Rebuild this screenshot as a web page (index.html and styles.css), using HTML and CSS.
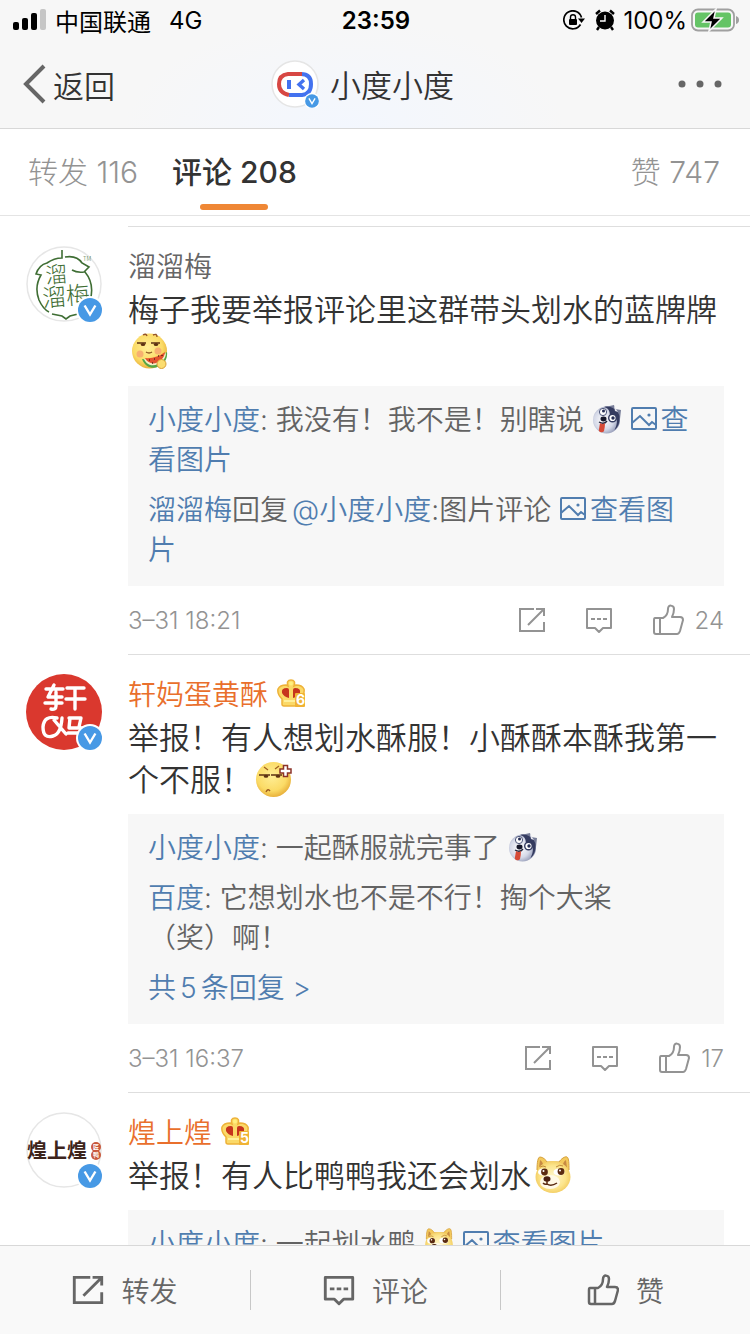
FILE: index.html
```html
<!DOCTYPE html>
<html lang="zh-CN">
<head>
<meta charset="utf-8">
<meta name="viewport" content="width=device-width, initial-scale=1">
<title>小度小度</title>
<link rel="stylesheet" href="styles.css">
</head>
<body>
<svg class="sprite" aria-hidden="true">
  <defs>
    <radialGradient id="yellow" cx=".45" cy=".4" r=".6"><stop offset="0" stop-color="#ffee96"/><stop offset=".7" stop-color="#fbdb66"/><stop offset="1" stop-color="#e9b23c"/></radialGradient>
    <radialGradient id="cream" cx=".5" cy=".5" r=".6"><stop offset="0" stop-color="#fff6cd"/><stop offset=".6" stop-color="#fce58c"/><stop offset="1" stop-color="#eec04c"/></radialGradient>
    <radialGradient id="fur" cx=".4" cy=".5" r=".6"><stop offset="0" stop-color="#ffffff"/><stop offset=".6" stop-color="#d5d9e8"/><stop offset="1" stop-color="#8990ae"/></radialGradient>
    <symbol id="share" viewBox="0 0 28 28"><path d="M16 3H2v22h24V16M26 10V3h-8M26 3 10 19" fill="none" stroke="currentColor"/></symbol>
    <symbol id="comment" viewBox="0 0 28 28"><path d="M2 3h24v19h-8l-4 4-4-4H2zM6 13h4M12 13h4M18 13h4" fill="none" stroke="currentColor" stroke-linejoin="round"/></symbol>
    <symbol id="like" viewBox="0 0 32 32"><path d="M8 14v15M3 14h8c4-2 5-6 5-9 0-5 6-4 6 0 0 4-1 6-2 8h8q3 0 3 3l-3 11q-1 3-3 3H4q-2 0-2-2V16q0-2 1-2z" fill="none" stroke="currentColor" stroke-linejoin="round"/></symbol>
    <symbol id="picture" viewBox="0 0 28 28"><path d="M3 3h22q1 0 1 1v19q0 1-1 1H3q-1 0-1-1V4q0-1 1-1zM2 18l8-7 9 9 3-3 4 3" fill="none" stroke="currentColor" stroke-width="2"/><circle cx="19" cy="10" r="1.6" fill="currentColor"/></symbol>
    <symbol id="verified" viewBox="0 0 28 28"><circle cx="14" cy="14" r="14" fill="#fff"/><circle cx="14" cy="14" r="12" fill="#4799e5"/><path d="M8.600 9.500 14 18.500l5.400-9" fill="none" stroke="#fff" stroke-width="2.400"/></symbol>
    <symbol id="melon" viewBox="0 0 38 38">
      <circle cx="18.500" cy="19" r="17.500" fill="url(#yellow)"/>
      <path d="M12 3q3-2 4 1M22 3q4-2 4 2" fill="none" stroke="#95542a" stroke-width="1.400"/>
      <path d="M6 11h9M20 11h9" stroke="#5c3112" stroke-width="1.400"/><ellipse cx="12" cy="12.500" rx="2.200" ry="1.600" fill="#5c3112"/><ellipse cx="25" cy="12.500" rx="2.200" ry="1.600" fill="#5c3112"/>
      <circle cx="9" cy="22" r="3.500" fill="#f7b070"/><circle cx="27" cy="19" r="3.500" fill="#f7b070"/><path d="M15 20q3 2 6 0" fill="none" stroke="#8a5423" stroke-width="1.300"/>
      <path d="M11 27q13 2 25-7c2 15-19 23-25 7z" fill="#55a646"/><path d="M13 27q12 1 22-6c0 11-17 18-22 6z" fill="#f5f0c8"/><path d="M14 26q11 1 20-6c-1 11-15 16-20 6z" fill="#e4512e"/>
      <path d="M18 28h1M23 27h1M27 24h1M21 31h1M31 23v1" stroke="#60281a" stroke-width="1.600"/><circle cx="30.500" cy="32" r="4.500" fill="#fbdd70" stroke="#d99e36"/>
    </symbol>
    <symbol id="angry" viewBox="0 0 38 38">
      <circle cx="18.500" cy="19.500" r="17.500" fill="url(#yellow)"/>
      <path d="M9 7l4 3M20 9l4-3" stroke="#a0601f" stroke-width="1.200"/>
      <path d="M4 15h11M16 15h11" stroke="#5c3112" stroke-width="1.500"/><ellipse cx="11" cy="16.300" rx="2.300" ry="1.500" fill="#5c3112"/><ellipse cx="23" cy="16.300" rx="2.300" ry="1.500" fill="#5c3112"/>
      <path d="M11 32q2-4 4-1" fill="none" stroke="#9c5a20" stroke-width="1.400"/>
      <path d="M28.500 5.500v3.500h-3.500v4h3.500v3.500h4v-3.500h3.500v-4h-3.500V5.500z" fill="#fff" stroke="#8c3328" stroke-width="1.500"/>
    </symbol>
    <symbol id="doge" viewBox="0 0 38 38">
      <path d="M3 14C3 6 4 1 6 1c3 0 6 3 7 5h12c2-3 6-6 8-5 2 1 2 7 2 13z" fill="#f3c95c" stroke="#d6a13b"/>
      <path d="M6 4c2 1 3 3 3 5l-4 3zM32 4c-2 1-3 3-3 5l4 3z" fill="#c78a43"/>
      <ellipse cx="19" cy="21" rx="17.500" ry="16" fill="url(#cream)"/><ellipse cx="16" cy="26" rx="10" ry="7" fill="#fff9e6"/>
      <ellipse cx="9" cy="16" rx="5" ry="3.600" fill="#fff"/><ellipse cx="25" cy="16" rx="5.500" ry="3.600" fill="#fff"/><circle cx="10.500" cy="16" r="3.400" fill="#5a2a10"/><circle cx="27" cy="15.500" r="3.400" fill="#5a2a10"/><circle cx="9.500" cy="15" r="1" fill="#fff"/><circle cx="26" cy="14.500" r="1" fill="#fff"/>
      <path d="M6 11q3-2 6 0M22 11q4-3 7-1" fill="none" stroke="#c18a38"/>
      <ellipse cx="13" cy="23" rx="3.500" ry="2.800" fill="#4a2011"/><path d="M13 25v3q4 3 10-1M13 28q-2 1-4-1" fill="none" stroke="#5a2a10" stroke-width="1.500"/>
    </symbol>
    <symbol id="husky" viewBox="0 0 30 30">
      <path d="M13 3 22 1l1 4 6 1-1 9z" fill="#777d98"/><circle cx="14.500" cy="16" r="13.500" fill="url(#fur)"/>
      <path d="M12 3c7-2 14 3 15.500 9 .5 6-1 11-5 14 3-6 3-10 1-12-4 1-6-3-6-6q-1-4-5.500-5z" fill="#343b5f"/>
      <path d="M22 2l1 5 3 1z" fill="#e4e5ee"/>
      <circle cx="11" cy="8" r="3.600" fill="#fff" stroke="#4d5679"/><circle cx="20.500" cy="14" r="3.800" fill="#fff" stroke="#343b5f" stroke-width="1.400"/><circle cx="11.500" cy="7" r="1.500" fill="#252d54"/><circle cx="21" cy="14" r="1.700" fill="#252d54"/>
      <ellipse cx="11.500" cy="15" rx="3" ry="2.400" fill="#16182b"/><path d="M7 18q5 3 8-1" fill="none" stroke="#25263c" stroke-width="1.400"/><path d="M8 19q3 2 5 0 0 4-1 8-1 2-4 1-2-1-1-3z" fill="#d64a37"/>
    </symbol>
    <symbol id="crown" viewBox="0 0 28 28">
      <path d="M5 25V20Q0 15 1 10q2-4 8-4l2 1q-2-6 3-6t3 6l2-1q6 0 8 4 1 5-4 10v5q0 2-2 2H7q-2 0-2-2z" fill="#fbd968" stroke="#eeb238" stroke-width="1.500"/>
      <path d="M5 14q-1-5 5-5 2 0 2 2v8q-5-1-7-5zM23 14q1-5-5-5-2 0-2 2v8q5-1 7-5z" fill="#c6331d"/><circle cx="14" cy="4.500" r="2" fill="#fff07e"/><path d="M7 22h13" stroke="#fff09b" stroke-width="2"/>
      <rect x="18" y="14" width="10" height="14" rx="1" fill="#f0b335"/>
    </symbol>
  </defs>
</svg>

<header class="top">
  <div class="status">
    <div class="status-side">
      <svg class="signal" viewBox="0 0 34 22" aria-hidden="true"><rect y="13" width="6" height="8" rx="2"/><rect x="9" y="9" width="6" height="12" rx="2"/><rect x="18" y="4" width="6" height="17" rx="2"/><rect x="27" width="6" height="21" rx="2" fill="#c6c6c6"/></svg>
      <span>中国联通</span><span class="network">4G</span>
    </div>
    <time class="clock">23:59</time>
    <div class="status-side status-right">
      <svg class="lock" viewBox="0 0 22 20" aria-hidden="true"><path d="M17.500 14.500a9 9 0 1 1 1-7" fill="none" stroke="#000" stroke-width="1.700"/><path d="M15 8.500h7l-3.500 4.500z"/><rect x="6" y="9" width="8" height="6" rx="1"/><path d="M7.500 9V7q0-2.200 2.500-2.200T12.500 7v2" fill="none" stroke="#000" stroke-width="1.400"/></svg>
      <svg class="alarm" viewBox="0 0 20 22" aria-hidden="true"><circle cx="10" cy="11.500" r="9"/><path d="M1 5 5 1.500M19 5l-4-3.500M4 18l-2 3M16 18l2 3" stroke="#000" stroke-width="2.400"/><path d="M10 6v6H5" fill="none" stroke="#fff" stroke-width="1.400"/></svg>
      <span>100%</span>
      <svg class="battery" viewBox="0 0 48 24" aria-hidden="true"><rect x="1" y="1.500" width="42" height="21" rx="6" fill="none" stroke="#a0a0a0" stroke-width="1.800"/><rect x="4" y="4.500" width="36" height="15" rx="3" fill="#65c466"/><path d="M45 8q3 1 3 4t-3 4z" fill="#a0a0a0"/><path d="M25 1 12 14h8l-2 9 13-13h-8z" stroke="#f7f7f7" stroke-width="1.500"/></svg>
    </div>
  </div>
  <nav class="nav">
    <button class="back" type="button"><svg viewBox="0 0 24 40" aria-hidden="true"><path d="M21 2 3 20l18 18" fill="none" stroke="#666" stroke-width="4"/></svg>返回</button>
    <div class="title">
      <svg class="title-avatar" viewBox="0 0 48 48" aria-hidden="true"><circle cx="24" cy="24" r="23" fill="#fff" stroke="#e5e5e5" stroke-width="1.500"/><path d="M30 14q10 0 10 10t-9 11H18" fill="none" stroke="#4372ef" stroke-width="4"/><path d="M31 14H17Q8 15 8 24t10 11" fill="none" stroke="#d74743" stroke-width="4"/><path d="M16 20h4v9h-4z" fill="#4372ef"/><path d="M33 20l-5 4.500 5 4.500" fill="none" stroke="#4372ef" stroke-width="3.400"/><use href="#verified" x="33" y="33" width="16" height="16"/></svg>
      <h1>小度小度</h1>
    </div>
    <button class="more" type="button" aria-label="更多"><svg viewBox="0 0 44 8" aria-hidden="true"><circle cx="4" cy="4" r="3.500"/><circle cx="22" cy="4" r="3.500"/><circle cx="40" cy="4" r="3.500"/></svg></button>
  </nav>
</header>

<div class="tabs">
  <button type="button">转发 116</button>
  <button type="button" class="active">评论 208</button>
  <button type="button" class="tab-end">赞 747</button>
</div>

<main class="comments">
  <article class="item">
    <svg class="avatar" viewBox="0 0 76 76" role="img" aria-label="溜溜梅">
      <circle cx="38" cy="38" r="37" fill="#fff" stroke="#e6e6e6" stroke-width="1.500"/>
      <g fill="none" stroke="#3f6e34" stroke-width="1.600"><path d="M36 4v8q-8 0-15 5-8 2-11 11l5 1q-7 12-2 25 4 9 10 12M39 11q12-2 17 6l7 4-5 5q-7 1-12-2M59 26q10 12 5 29M26 68l10 2 4 3 4-3 8-2"/></g>
      <g class="plum" fill="#3f6e34" transform="rotate(-5 38 38)"><text x="20" y="36" font-size="22">溜</text><text x="15" y="59" font-size="24">溜梅</text></g>
      <text class="plum" x="57" y="15" font-size="6" fill="#3f6e34">TM</text>
      <use href="#verified" x="50" y="50" width="28" height="28"/>
    </svg>
    <div class="content">
      <h2 class="name plain">溜溜梅</h2>
      <p class="text">梅子我要举报评论里这群带头划水的蓝牌牌<svg class="emoji"><use href="#melon"/></svg></p>
      <div class="replies">
        <p><a href="#">小度小度</a>: 我没有！我不是！别瞎说 <svg class="emoji-s"><use href="#husky"/></svg> <a href="#"><svg class="pic"><use href="#picture"/></svg>查看图片</a></p>
        <p><a href="#">溜溜梅</a>回复<a class="mention" href="#">@小度小度</a>:图片评论 <a href="#"><svg class="pic"><use href="#picture"/></svg>查看图片</a></p>
      </div>
      <footer class="meta">
        <time>3–31 18:21</time>
        <button type="button" aria-label="转发"><svg class="i28"><use href="#share"/></svg></button>
        <button type="button" aria-label="评论"><svg class="i28"><use href="#comment"/></svg></button>
        <button type="button"><svg class="i32"><use href="#like"/></svg>24</button>
      </footer>
    </div>
  </article>

  <article class="item">
    <svg class="avatar" viewBox="0 0 76 76" role="img" aria-label="轩妈">
      <circle cx="38" cy="38" r="38" fill="#da382e"/>
      <g fill="none" stroke="#fff" stroke-width="3.400" stroke-linecap="round" stroke-linejoin="round">
        <path d="M20 15h17M28 11l-6 12h14M19 29h17M30 18v14q0 4-5 3M41 14h17M40 25h19M49 14v21"/>
        <path d="M31 44q-13-3-14 9 0 12 10 9 8-2 9-18M28 46l12 14M43 44h12l-2 9M44 44l-1 10h15l-2 10M42 59h11"/>
      </g>
      <use href="#verified" x="50" y="50" width="28" height="28"/>
    </svg>
    <div class="content">
      <h2 class="name">轩妈蛋黄酥<svg class="crown" viewBox="0 0 28 28"><use href="#crown"/><text x="19" y="26">6</text></svg></h2>
      <p class="text">举报！有人想划水酥服！小酥酥本酥我第一个不服！<svg class="emoji"><use href="#angry"/></svg></p>
      <div class="replies">
        <p><a href="#">小度小度</a>: 一起酥服就完事了 <svg class="emoji-s"><use href="#husky"/></svg></p>
        <p><a href="#">百度</a>: 它想划水也不是不行！掏个大桨<span class="keep">（奖）啊！</span></p>
        <p><a href="#">共<span class="count">5</span>条回复 &gt;</a></p>
      </div>
      <footer class="meta">
        <time>3–31 16:37</time>
        <button type="button" aria-label="转发"><svg class="i28"><use href="#share"/></svg></button>
        <button type="button" aria-label="评论"><svg class="i28"><use href="#comment"/></svg></button>
        <button type="button"><svg class="i32"><use href="#like"/></svg>17</button>
      </footer>
    </div>
  </article>

  <article class="item">
    <svg class="avatar" viewBox="0 0 76 76" role="img" aria-label="煌上煌">
      <circle cx="38" cy="38" r="37" fill="#fff" stroke="#e6e6e6" stroke-width="1.500"/>
      <text class="brand" x="1" y="46" font-size="20" fill="#3d241b">煌上煌</text>
      <circle cx="70" cy="35" r="5" fill="#c9583c"/><circle cx="70" cy="43" r="5" fill="#c9583c"/>
      <text class="brand" x="67" y="37" font-size="6" fill="#fff">匠</text><text class="brand" x="67" y="45" font-size="6" fill="#fff">鸭</text>
      <use href="#verified" x="50" y="50" width="28" height="28"/>
    </svg>
    <div class="content">
      <h2 class="name">煌上煌<svg class="crown" viewBox="0 0 28 28"><use href="#crown"/><text x="19" y="26">5</text></svg></h2>
      <p class="text">举报！有人比鸭鸭我还会划水<svg class="emoji"><use href="#doge"/></svg></p>
      <div class="replies">
        <p><a href="#">小度小度</a>: 一起划水鸭 <svg class="emoji-s"><use href="#doge"/></svg> <a href="#"><svg class="pic"><use href="#picture"/></svg>查看图片</a></p>
      </div>
    </div>
  </article>
</main>

<footer class="toolbar">
  <button type="button"><svg class="i32"><use href="#share"/></svg>转发</button>
  <button type="button"><svg class="i32"><use href="#comment"/></svg>评论</button>
  <button type="button"><svg class="i32"><use href="#like"/></svg>赞</button>
</footer>
</body>
</html>
```
FILE: styles.css
```css
* { box-sizing: border-box; }
body {
  margin: 0;
  height: 100vh;
  display: flex;
  flex-direction: column;
  background: #fff;
  color: #333;
  font-family: Inter, "Noto Sans CJK SC", sans-serif;
  font-weight: 350;
}
h1, h2, p { margin: 0; font-weight: inherit; }
button {
  border: 0;
  padding: 0;
  background: none;
  color: inherit;
  font: inherit;
  display: flex;
  align-items: center;
}
a { color: #507daf; text-decoration: none; }
.sprite { position: absolute; width: 0; height: 0; }

.top {
  border-bottom: 1px solid #d8d8d8;
  background: radial-gradient(ellipse 220px 110px at 46% 100%, #f3f7fe, #f7f7f7);
}
.status {
  display: grid;
  grid-template-columns: 1fr auto 1fr;
  align-items: center;
  height: 40px;
  padding: 0 11px 0 13px;
  color: #000;
  font-size: 24px;
  font-weight: 400;
}
.status-side { display: flex; align-items: center; }
.status-right { justify-content: flex-end; }
.signal { width: 34px; height: 22px; margin-right: 8px; }
.network { margin-left: 18px; }
.clock { font-weight: 600; }
.lock { width: 22px; height: 20px; margin-right: 10px; }
.alarm { width: 20px; height: 22px; margin-right: 8px; }
.battery { width: 48px; height: 24px; margin-left: 4px; }

.nav {
  display: grid;
  grid-template-columns: 1fr auto 1fr;
  align-items: center;
  height: 88px;
  padding: 0 28px 0 23px;
  font-size: 31px;
}
.back { gap: 6px; }
.back svg { width: 24px; height: 40px; }
.title { display: flex; align-items: center; gap: 11px; padding-right: 20px; }
.title h1 { padding-bottom: 2px; font-size: 31px; }
.title-avatar { width: 48px; height: 48px; }
.more { justify-self: end; }
.more svg { width: 44px; height: 8px; fill: #666; }

.tabs {
  display: flex;
  gap: 34px;
  height: 87px;
  padding: 0 30px 0 28px;
  border-bottom: 1px solid #e4e4e4;
  color: #939393;
  font-size: 30px;
  font-weight: 300;
}
.tabs button { position: relative; padding-bottom: 4px; }
.tabs .active { color: #333; font-weight: 500; }
.tabs .active::after {
  content: "";
  position: absolute;
  left: 50%;
  bottom: 5px;
  width: 68px;
  height: 6px;
  margin-left: -34px;
  border-radius: 3px;
  background: #ef8735;
}
.tabs .tab-end { margin-left: auto; }

.comments { flex: 1; min-height: 0; overflow: hidden; padding-top: 10px; }
.item {
  display: grid;
  grid-template-columns: 76px 1fr;
  gap: 26px;
  padding-left: 26px;
}
.avatar { width: 76px; height: 76px; margin-top: 20px; overflow: visible; }
.plum { font-family: "Noto Sans CJK SC", sans-serif; font-weight: 300; }
.brand { font-family: "Noto Sans CJK SC", sans-serif; font-weight: 700; }
.content { border-top: 1px solid #dedede; padding: 20px 26px 0 0; }
.name {
  display: flex;
  align-items: center;
  gap: 9px;
  height: 36px;
  color: #e96f2c;
  font-size: 28px;
}
.plain { color: #666; }
.crown { width: 28px; height: 28px; }
.crown text { fill: #fff; font-size: 14px; font-weight: 700; }
.text { margin: 6px -4px 13px 0; font-size: 31px; line-height: 42px; }
.emoji { width: 38px; height: 38px; margin: 0 3px; vertical-align: -7px; }
.replies {
  display: grid;
  gap: 10px;
  padding: 14px 24px 16px 20px;
  background: #f7f7f7;
  color: #636363;
  font-size: 28px;
  line-height: 40px;
}
.keep { white-space: nowrap; }
.count { margin: 0 4px; }
.emoji-s { width: 30px; height: 30px; vertical-align: -4px; }
.pic { width: 28px; height: 28px; margin-right: 3px; vertical-align: -3px; }
.mention { margin-left: 4px; }
.meta {
  display: flex;
  align-items: center;
  gap: 39px;
  height: 68px;
  color: #939393;
  font-size: 24px;
}
.meta time { flex: 1; font-weight: 300; }
.meta button { gap: 11px; }
.i28 { width: 28px; height: 28px; stroke-width: 2; }
.i32 { width: 32px; height: 32px; stroke-width: 2; }

.toolbar {
  display: grid;
  grid-template-columns: repeat(3, 1fr);
  align-items: center;
  height: 89px;
  border-top: 1px solid #d8d8d8;
  background: #f9f9f9;
  color: #666;
  font-size: 28px;
}
.toolbar button { justify-content: center; gap: 17px; height: 40px; }
.toolbar button + button { border-left: 1px solid #c8c8c8; }
.toolbar svg { stroke-width: 2.5; }
```
